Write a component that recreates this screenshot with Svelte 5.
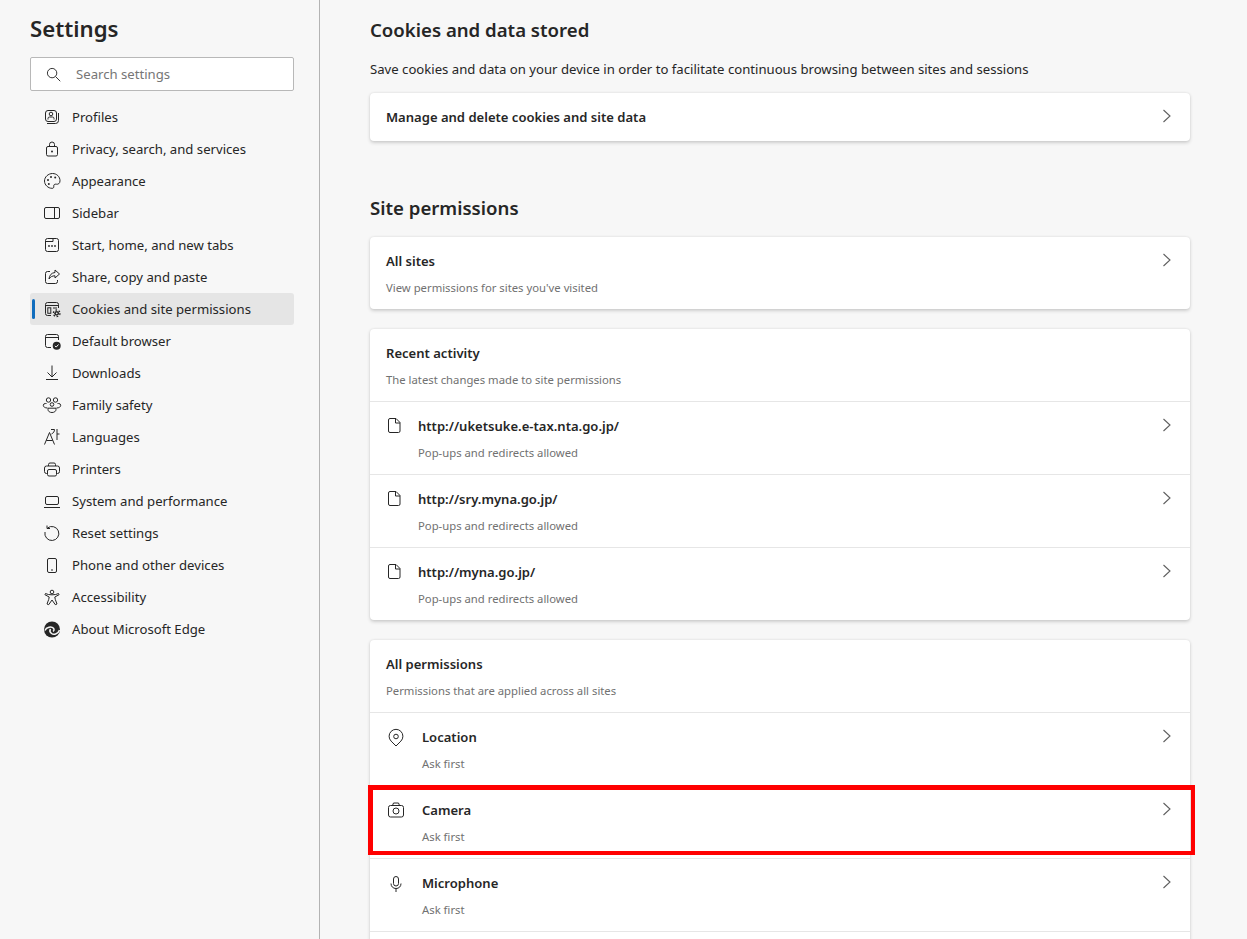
<script>
  const navItems = [
    { label: 'Profiles', icon: 'profiles' },
    { label: 'Privacy, search, and services', icon: 'lock' },
    { label: 'Appearance', icon: 'palette' },
    { label: 'Sidebar', icon: 'sidebar' },
    { label: 'Start, home, and new tabs', icon: 'start' },
    { label: 'Share, copy and paste', icon: 'share' },
    { label: 'Cookies and site permissions', icon: 'cookies', active: true },
    { label: 'Default browser', icon: 'browser' },
    { label: 'Downloads', icon: 'download' },
    { label: 'Family safety', icon: 'family' },
    { label: 'Languages', icon: 'languages' },
    { label: 'Printers', icon: 'printer' },
    { label: 'System and performance', icon: 'laptop' },
    { label: 'Reset settings', icon: 'reset' },
    { label: 'Phone and other devices', icon: 'phone' },
    { label: 'Accessibility', icon: 'person' },
    { label: 'About Microsoft Edge', icon: 'edge' }
  ];

  const recent = ['http://uketsuke.e-tax.nta.go.jp/', 'http://sry.myna.go.jp/', 'http://myna.go.jp/'];

  const permissions = [
    { label: 'Location', icon: 'pin' },
    { label: 'Camera', icon: 'camera', marked: true },
    { label: 'Microphone', icon: 'mic' }
  ];
</script>

{#snippet icon(name)}
  <svg class="icon" viewBox="0 0 20 20" aria-hidden="true">
    {#if name === 'profiles'}
      <rect x="3.500" y="3.500" width="11" height="11" rx="2.500" />
      <circle cx="9" cy="7" r="1.800" />
      <path d="M6 12.500v-1a1.500 1.500 0 0 1 1.500-1.500h3a1.500 1.500 0 0 1 1.500 1.500v1" />
      <path d="M5 16.500h8.500a3 3 0 0 0 3-3V6" />
    {:else if name === 'lock'}
      <rect x="4.500" y="7.500" width="11" height="9.500" rx="1.500" />
      <path d="M7.500 7.500V5.500a2.500 2.500 0 0 1 5 0v2" />
      <circle class="fill" cx="10" cy="12.500" r="1" />
    {:else if name === 'palette'}
      <path d="M10.500 2.500c4.300 0 7.500 3.200 7.500 7.300 0 2.800-2 3.700-3.600 3.400-1.700-.3-2.900.4-2.600 2 .2 1.400-.5 2.300-1.900 2.100C6.200 17.300 2.500 14 2.500 10c0-4 3.700-7.500 8-7.500z" />
      <circle class="fill" cx="6" cy="9" r="1" />
      <circle class="fill" cx="9" cy="6" r="1" />
      <circle class="fill" cx="13.200" cy="6.600" r="1" />
      <circle class="fill" cx="6.800" cy="13" r="1" />
    {:else if name === 'sidebar'}
      <rect x="2.500" y="4.500" width="15" height="11" rx="1.500" />
      <path d="M12.500 4.500v11" />
    {:else if name === 'start'}
      <rect x="3.500" y="3.500" width="13" height="13" rx="2" />
      <path d="M3.500 6.500h7.500V3.500" />
      <circle class="fill" cx="7" cy="11" r=".9" />
      <circle class="fill" cx="10" cy="11" r=".9" />
      <circle class="fill" cx="13" cy="11" r=".9" />
    {:else if name === 'share'}
      <path d="M8 4.500H5.500a2 2 0 0 0-2 2v8a2 2 0 0 0 2 2h8a2 2 0 0 0 2-2v-1.500" />
      <path d="M13 3l4.500 4-4.500 4V8.800c-2.800 0-4.600 1-6 3.200.3-3.600 2.400-6.200 6-6.500z" />
    {:else if name === 'cookies'}
      <path d="M9 16.500H5.500a2 2 0 0 1-2-2v-9a2 2 0 0 1 2-2h9a2 2 0 0 1 2 2V9" />
      <path d="M3.500 6.500h13" />
      <rect x="5.800" y="8.800" width="3" height="5.500" />
      <path d="M11 9h4" />
      <circle class="gear" cx="14.700" cy="14.300" r="2.400" />
      <circle class="gear-teeth" cx="14.700" cy="14.300" r="3.300" />
      <circle class="hole" cx="14.700" cy="14.300" r=".9" />
    {:else if name === 'browser'}
      <path d="M9 16.500H5.500a2 2 0 0 1-2-2v-9a2 2 0 0 1 2-2h9a2 2 0 0 1 2 2V9" />
      <path d="M3.500 6.500h13" />
      <circle class="fill" cx="14.700" cy="14.700" r="4" />
      <path class="check" d="M12.900 14.800l1.300 1.300 2.300-2.600" />
    {:else if name === 'download'}
      <path d="M10 2.500v11M5.500 9.500l4.500 4.500 4.500-4.500M4 16.500h12" />
    {:else if name === 'family'}
      <circle cx="6.500" cy="5" r="2.200" />
      <circle cx="13.500" cy="5" r="2.200" />
      <circle cx="10" cy="9.500" r="1.800" />
      <path d="M4.500 8.500H3.300a2 2 0 0 0-2 1.800c0 1.400 1.400 2.700 4.200 2.700M15.500 8.500h1.200a2 2 0 0 1 2 1.800c0 1.400-1.400 2.700-4.200 2.700" />
      <path d="M6 13.200h8v1.300c0 1.900-1.800 3-4 3s-4-1.100-4-3z" />
    {:else if name === 'languages'}
      <path d="M2.500 17.500L7.500 5.500l5 12M4.300 13.500h6.400" />
      <path d="M9 2.500h3.500c0 2-1 3.500-3 4.500M15 2v11M15 7h2.500" />
    {:else if name === 'printer'}
      <path d="M6.500 7V5.500A1.500 1.500 0 0 1 8 4h4a1.500 1.500 0 0 1 1.500 1.500V7" />
      <path d="M5.500 14.500h-1a2 2 0 0 1-2-2V9a2 2 0 0 1 2-2h11a2 2 0 0 1 2 2v3.500a2 2 0 0 1-2 2h-1" />
      <rect x="5.500" y="10.500" width="9" height="6.500" rx="1.500" />
    {:else if name === 'laptop'}
      <rect x="3.500" y="5.500" width="13" height="8" rx="1.500" />
      <path d="M2 16.500h16" />
    {:else if name === 'reset'}
      <path d="M5.500 5a7 7 0 1 1-2.500 4" />
      <path d="M5 2.500v3h3" />
    {:else if name === 'phone'}
      <rect x="5.500" y="3.500" width="9" height="14" rx="1.500" />
      <path d="M9 15h2" />
    {:else if name === 'person'}
      <circle cx="10" cy="5" r="1.800" />
      <path d="M3.500 6.500c3 1.800 10 1.800 13 0l.6 1.200-4.300 2.300.5 2.500 1.700 4.500-1.700.7L10 13l-3.300 4.700-1.700-.7 1.700-4.500.5-2.500-4.300-2.300z" />
    {:else if name === 'edge'}
      <circle class="fill" cx="10" cy="10.500" r="8" />
      <path class="swirl" d="M3 11.500c1.200-3.500 6.500-4.500 8.500-2.200 1 1.300.5 2.500-.6 3M17.500 11c-1.500 4.500-6 5-8 3.500-1.500-1.100-2-3-1-4.500" />
    {:else if name === 'file'}
      <path d="M4 2.500h6l4 4v8.500a1.500 1.500 0 0 1-1.500 1.500h-8.500A1.500 1.500 0 0 1 2.500 15V4A1.500 1.500 0 0 1 4 2.500z" />
      <path d="M9.500 2.500v4.500H14" />
    {:else if name === 'pin'}
      <path d="M10 19l-4.900-4.900a6.900 6.900 0 1 1 9.800 0z" />
      <circle cx="10" cy="9.500" r="2.300" />
    {:else if name === 'camera'}
      <rect x="2.500" y="5.500" width="15" height="11.500" rx="2" />
      <path d="M6.500 5.500l1-2.500h5l1 2.500" />
      <circle cx="10" cy="11" r="3" />
    {:else if name === 'mic'}
      <rect x="7.500" y="3.500" width="5" height="9.500" rx="2.500" />
      <path d="M5 10.500c0 3 2 5 5 5s5-2 5-5M10 15.500v3.500" />
    {/if}
  </svg>
{/snippet}

{#snippet chevron()}
  <svg class="chevron" viewBox="0 0 16 16" aria-hidden="true">
    <path d="M5.500 2l6.500 6-6.500 6" />
  </svg>
{/snippet}

<div class="page">
  <aside class="sidebar">
    <h1>Settings</h1>
    <div class="search">
      <svg class="search-icon" viewBox="0 0 16 16" aria-hidden="true">
        <circle cx="6.500" cy="6.500" r="5" />
        <path d="M10.200 10.200l5 5" />
      </svg>
      <span>Search settings</span>
    </div>
    <nav>
      {#each navItems as item}
        <div class="nav-item" class:active={item.active}>
          {@render icon(item.icon)}
          <span>{item.label}</span>
        </div>
      {/each}
    </nav>
  </aside>

  <main>
    <h2 class="first">Cookies and data stored</h2>
    <p class="lead">Save cookies and data on your device in order to facilitate continuous browsing between sites and sessions</p>
    <section class="card">
      <div class="row plain">
        <span class="title">Manage and delete cookies and site data</span>
        {@render chevron()}
      </div>
    </section>

    <h2 class="second">Site permissions</h2>
    <section class="card">
      <div class="row">
        <div class="text">
          <span class="title">All sites</span>
          <span class="sub">View permissions for sites you've visited</span>
        </div>
        {@render chevron()}
      </div>
    </section>

    <section class="card">
      <div class="row head">
        <div class="text">
          <span class="title">Recent activity</span>
          <span class="sub">The latest changes made to site permissions</span>
        </div>
      </div>
      {#each recent as url}
        <div class="row">
          <div class="row-icon narrow">{@render icon('file')}</div>
          <div class="text">
            <span class="title">{url}</span>
            <span class="sub">Pop-ups and redirects allowed</span>
          </div>
          {@render chevron()}
        </div>
      {/each}
    </section>

    <section class="card">
      <div class="row head">
        <div class="text">
          <span class="title">All permissions</span>
          <span class="sub">Permissions that are applied across all sites</span>
        </div>
      </div>
      {#each permissions as perm}
        <div class="row">
          <div class="row-icon">{@render icon(perm.icon)}</div>
          <div class="text">
            <span class="title">{perm.label}</span>
            <span class="sub">Ask first</span>
          </div>
          {@render chevron()}
          {#if perm.marked}<div class="marker"></div>{/if}
        </div>
      {/each}
      <div class="row"></div>
    </section>
  </main>
</div>

<style>
  :global(body) {
    margin: 0;
    background: #f7f7f7;
  }

  .page {
    display: flex;
    height: 939px;
    overflow: hidden;
    font-family: "Noto Sans", "Open Sans", sans-serif;
    font-size: 13.150px;
    color: #262626;
  }

  .sidebar {
    flex: 0 0 auto;
    box-sizing: border-box;
    width: 320px;
    padding: 0 25px 0 30px;
    border-right: 1px solid #b3b3b3;
  }

  h1 {
    margin: 13px 0 13px;
    font-size: 22.200px;
    line-height: 31px;
    font-weight: 600;
  }

  .search {
    box-sizing: border-box;
    display: flex;
    align-items: center;
    height: 34px;
    padding-left: 15px;
    background: #fff;
    border: 1px solid #b8b8b8;
    border-radius: 2px;
    color: #767676;
  }

  .search-icon {
    width: 15px;
    height: 15px;
    margin-right: 15px;
    fill: none;
    stroke: #262626;
  }

  nav {
    margin-top: 10px;
  }

  .nav-item {
    position: relative;
    display: flex;
    align-items: center;
    gap: 10px;
    height: 32px;
    padding-left: 12px;
    border-radius: 3px;
  }

  .nav-item.active {
    background: #e5e5e5;
  }

  .nav-item.active::before {
    content: "";
    position: absolute;
    left: 2px;
    top: 6px;
    width: 3px;
    height: 20px;
    border-radius: 2px;
    background: #0f6cbd;
  }

  .icon {
    flex: none;
    width: 20px;
    height: 20px;
    fill: none;
    stroke: #262626;
    stroke-width: 1;
  }

  .icon .fill {
    fill: #262626;
    stroke: none;
  }

  .icon .gear {
    fill: #262626;
    stroke: none;
  }

  .icon .gear-teeth {
    stroke: #262626;
    stroke-width: 1.300;
    stroke-dasharray: 1.700 1.750;
  }

  .icon .hole {
    fill: #e5e5e5;
    stroke: none;
  }

  .icon .check {
    stroke: #fff;
  }

  .icon .swirl {
    stroke: #f7f7f7;
    stroke-width: 1.500;
  }

  main {
    flex: 1;
    min-width: 0;
    padding: 0 57px 0 50px;
  }

  h2 {
    margin: 0;
    font-size: 18.600px;
    line-height: 28px;
    font-weight: 600;
  }

  h2.first {
    margin-top: 16px;
  }

  h2.second {
    margin-top: 53px;
    margin-bottom: 15px;
  }

  .lead {
    margin: 15px 0 14px;
    line-height: 20px;
  }

  .card {
    margin-bottom: 20px;
    background: #fff;
    border-radius: 4px;
    box-shadow: 0 1.600px 3.600px rgba(0, 0, 0, 0.16), 0 0 2px rgba(0, 0, 0, 0.08);
  }

  .row {
    position: relative;
    box-sizing: border-box;
    display: flex;
    align-items: flex-start;
    height: 73px;
    padding: 14px 16px 0;
    border-top: 1px solid #e6e6e6;
  }

  .row:first-child {
    height: 72px;
    border-top: 0;
  }

  .row.plain {
    height: 48px;
    padding-top: 14px;
  }

  .row-icon {
    flex: none;
    width: 36px;
    height: 20px;
  }

  .row-icon.narrow {
    width: 32px;
  }

  .text {
    flex: 1;
    min-width: 0;
    display: flex;
    flex-direction: column;
    gap: 7px;
  }

  .title {
    flex: 1;
    font-size: 13.050px;
    line-height: 20px;
    font-weight: 600;
  }

  .sub {
    font-size: 11.300px;
    line-height: 20px;
    color: #717171;
  }

  .chevron {
    flex: none;
    width: 16px;
    height: 16px;
    margin: 1px 0 0 8px;
    fill: none;
    stroke: #5f5f5f;
    stroke-width: 1.100;
  }

  .marker {
    position: absolute;
    left: -2px;
    right: -5px;
    top: -1px;
    height: 70px;
    box-sizing: border-box;
    border-style: solid;
    border-color: #f00;
    border-width: 5px 4px 4px 5px;
  }
</style>
